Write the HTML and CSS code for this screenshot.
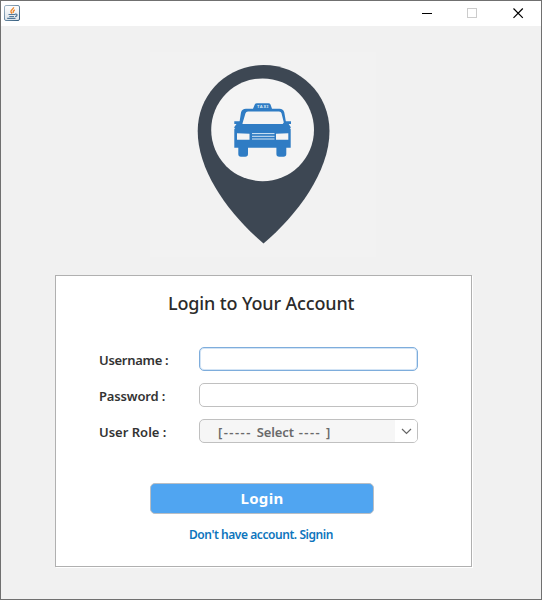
FILE: index.html
```html
<!DOCTYPE html>
<html lang="en">
<head>
<meta charset="utf-8">
<title>Login</title>
<link rel="stylesheet" href="styles.css">
</head>
<body>
<div class="window">
  <header class="titlebar">
    <svg class="app-icon" width="16" height="16" viewBox="0 0 16 16">
      <defs>
        <linearGradient id="frame" x1="0" y1="0" x2="1" y2="1"><stop offset="0" stop-color="#a5b8c8"/><stop offset="1" stop-color="#315b7d"/></linearGradient>
        <linearGradient id="face" x1="0" y1="0" x2="0" y2="1"><stop offset="0" stop-color="#fff"/><stop offset="1" stop-color="#dce3e9"/></linearGradient>
      </defs>
      <rect x=".5" y=".5" width="15" height="15" rx="1.5" fill="url(#face)" stroke="url(#frame)"/>
      <path d="M9.7 2.3C9.5 4.5 6 5 7 7.2L8 8.5M10.8 4.8C8.5 6 9 6.8 9.3 8" fill="none" stroke="#ee8425" stroke-width="1.3"/>
      <path d="M4.5 9.5H11M5.3 11.5H10M11 9.2C14 8.6 13.4 11.4 11 11.5M3.2 13.3H11.5" fill="none" stroke="#527999" stroke-width="1.2"/>
    </svg>
    <div class="controls">
      <svg width="11" height="11" viewBox="0 0 11 11" shape-rendering="crispEdges"><path d="M0 5.5H10" stroke="#000"/></svg>
      <svg width="11" height="11" viewBox="0 0 11 11"><rect x=".5" y=".5" width="9" height="9" fill="none" stroke="#ccc"/></svg>
      <svg class="close" width="11" height="11" viewBox="0 0 11 11"><path d="M.5 .5L9.8 9.8M9.8 .5L.5 9.8" stroke="#000" stroke-width="1.2"/></svg>
    </div>
  </header>
  <main class="content">
    <div class="logo">
      <svg width="226" height="205" viewBox="150 52 226 205">
        <path d="M263.5 65C227 65 197.700 94 197.700 131C197.700 172 230 215 263.5 243.5C297 215 329.5 172 329.5 131C329.5 94 300 65 263.5 65Z" fill="#3d4753"/>
        <circle cx="262.6" cy="129.8" r="51.4" fill="#f4f4f4"/>
        <g fill="#2f7cc4">
          <path fill-rule="evenodd" d="M239.200 124L241 112.5Q242 108.800 246 108.800H253L254.800 104.500Q255.300 103.200 257 103.200H268.300Q270 103.200 270.500 104.500L272 108.800H279.500Q283.300 108.800 284.300 112.500L286.300 124L290.700 129V147.800H286.300V154Q286.300 156.800 283.500 156.800H279.200Q276.400 156.800 276.400 154V147.800H248V154Q248 156.800 245.200 156.800H241Q238.300 156.800 238.300 154V147.800H234.300V129ZM242.300 124H284.200L281.500 113.300Q281 111.500 279 111.500H248Q246 111.500 245.500 113.300Z"/>
          <path d="M234.300 121.200H240.500L242.500 124V128H234.300V127L236.500 124H234.300ZM291 121.200H284.800L282.700 124V128H290.700V127L288.700 124H291Z"/>
        </g>
        <path d="M237 133.300L249.500 133.800V139.700H237ZM288.300 133.300L276 133.800V139.700H288.300Z" fill="#f4f4f4"/>
        <path d="M252 133.600H274.500M252 136.300H274.500M252 139H274.500" stroke="#d7e7f5" stroke-width="1"/>
        <text x="257" y="107.600" class="taxi" textLength="11.500">TAXI</text>
      </svg>
    </div>
    <form class="card">
      <h1>Login to Your Account</h1>
      <div class="fields">
        <label for="user" class="username">Username :</label><input id="user" class="field focused" type="text">
        <label for="pass" class="password">Password :</label><input id="pass" class="field" type="password">
        <span class="label role">User Role :</span>
        <div class="field select"><span><span class="dashes">[----- </span>Select<span class="dashes"> ---- ]</span></span><i><svg width="11" height="7" viewBox="0 0 11 7"><path d="M1 1L5.500 5.500L10 1" fill="none" stroke="#666" stroke-width="1.200"/></svg></i></div>
      </div>
      <button type="button"><span>Login</span></button>
      <a class="signin">Don't have account. Signin</a>
    </form>
  </main>
</div>
</body>
</html>
```

FILE: styles.css
```css
* { box-sizing: border-box; }
body { margin: 0; font-family: "Noto Sans", "Open Sans", sans-serif; }
.window { width: 542px; height: 600px; border: 1px solid #707070; background: #f1f1f1; overflow: hidden; }
.titlebar { height: 25px; background: #fff; display: flex; justify-content: space-between; padding: 4px 17px 0 3px; }
.app-icon { display: block; }
.controls { display: flex; gap: 34px; padding-top: 3px; }
.controls svg { display: block; }
.controls .close { margin-left: 1px; }
.logo { height: 205px; margin: 26px 0 0 149px; width: 226px; background: #f2f2f2; }
.logo svg { display: block; }
.taxi { font-size: 4.200px; font-weight: 700; fill: #d7e7f5; }
.card { width: 417px; height: 292px; margin: 18px 0 0 54px; border: 1px solid #b0b0b0; background: #fff; box-shadow: 1px 1px #fff; display: flex; flex-direction: column; }
h1 { margin: 15px 0 0 112px; font-size: 18px; line-height: 25px; font-weight: 500; color: #2b2b2b; white-space: nowrap; letter-spacing: -.14px; }
.fields { display: grid; grid-template-columns: 100px 219px; grid-auto-rows: 24px; row-gap: 12px; margin: 31px 0 0 43px; }
label, .label { font-size: 13px; line-height: 26px; font-weight: 600; color: #333; white-space: nowrap; letter-spacing: -.3px; }
.password { letter-spacing: -.15px; }
.role { letter-spacing: 0; }
.field { width: 219px; height: 24px; border: 1px solid #c0c0c0; border-radius: 5px; background: #fff; padding: 0 6px; outline: 0; }
.focused { border-color: #7eaddc; box-shadow: inset 0 0 0 1px #d3e4f5; }
.select { background: #f6f6f6; display: flex; justify-content: space-between; padding: 0 0 0 18px; overflow: hidden; font-size: 13px; line-height: 25px; font-weight: 600; color: #6a6a6a; white-space: nowrap; letter-spacing: -.1px; }
.dashes { letter-spacing: 1.450px; }
.select i { width: 22px; background: #fff; display: flex; align-items: center; justify-content: center; }
button { width: 224px; height: 31px; margin: 40px 0 0 94px; padding: 0; border: 1px solid #b9bec4; border-radius: 5px; background: #50a5f1; color: #fff; font: 700 15px/29px "Noto Sans", "Open Sans", sans-serif; letter-spacing: .3px; }
.signin { margin: 12px 0 0 133px; font-size: 12px; line-height: 17px; font-weight: 600; color: #0d75bd; white-space: nowrap; letter-spacing: -.44px; }
```
